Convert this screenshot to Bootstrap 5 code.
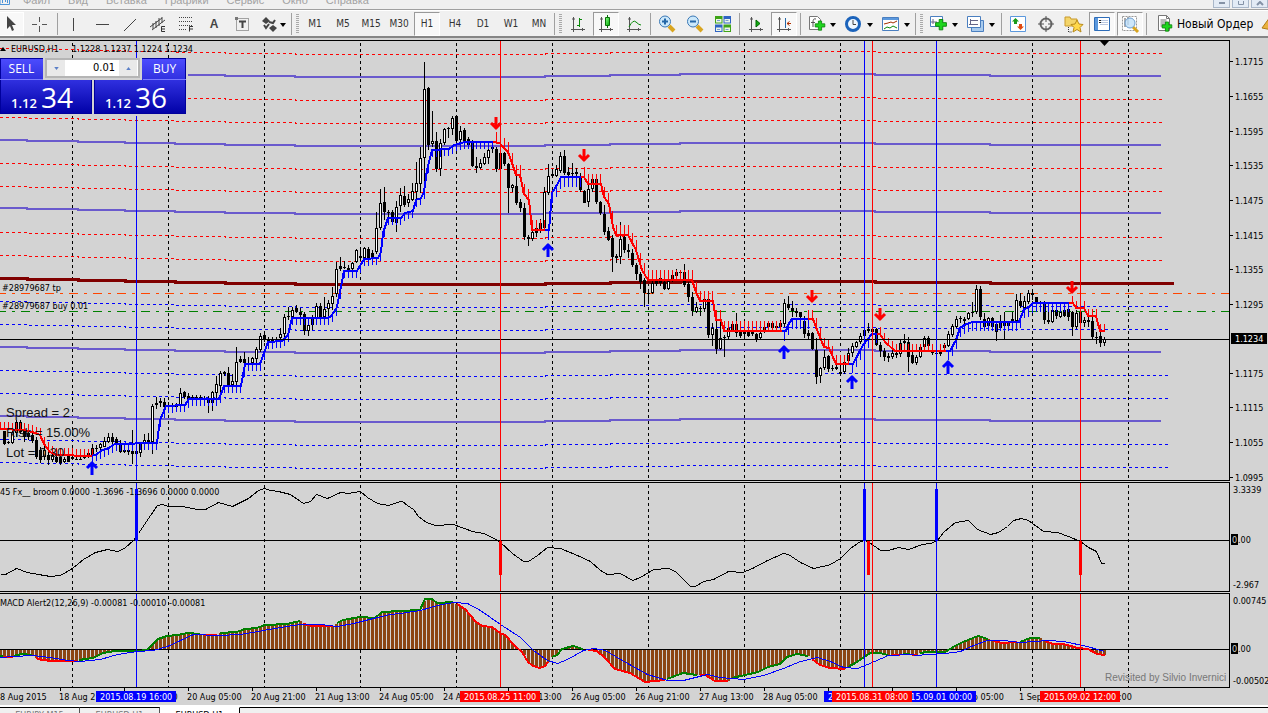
<!DOCTYPE html>
<html lang="ru">
<head>
<meta charset="utf-8">
<meta name="viewport" content="width=device-width, initial-scale=1">
<title>EURUSD,H1</title>
<link href="https://cdn.jsdelivr.net/npm/bootstrap@5.3.0/dist/css/bootstrap.min.css" rel="stylesheet">
<style>
  :root { --face:#f0f0f0; --plot:#d3d3d3; }
  body { background:var(--face); font-family:"DejaVu Sans Condensed","DejaVu Sans",sans-serif; font-size:9px; line-height:12px; color:#000; }
  button { font-family:inherit; color:inherit; }
  .menubar { height:9px; }
  .menubar .entries { font:11px/14px "Liberation Sans",sans-serif; margin:-7px 0 0 13px; gap:18px; }
  .menubar a { color:#a3a3a3; text-decoration:none; }
  .winbtns { gap:2px; }
  .winbtn { width:17px; height:8px; border:1px solid #a9b7c9; border-top:0; background:#e3ebf5; padding:0; }
  .winbtn svg { display:block; margin:auto; }
  .tools { height:29px; border-top:1px solid #a0a0a0; border-bottom:2px solid #858585; box-shadow:inset 0 1px #fff; padding:2px 0 1px; white-space:nowrap; }
  .tool { width:28px; height:24px; padding:0; border:0; background:none; flex:none; }
  .tool svg { display:block; margin:auto; width:20px; height:20px; }
  .tool.on { background:#f8f8f8; border:1px solid #fff; border-top-color:#999; border-left-color:#999; width:26px; margin:0 1px; }
  .tool.on.start { margin-left:-2px; border-left-color:#fff; border-top-color:#fff; }
  .tool.tf { font-size:10px; color:#333; }
  .tool.glyph { font:bold 12px/20px "Liberation Sans",sans-serif; color:#444; }
  .tool.drop { width:37px; }
  .tool.drop.narrow { width:34px; }
  .tool.drop svg { width:32px; margin-left:4px; }
  .sepbar { width:1px; background:#a0a0a0; flex:none; height:22px; align-self:center; margin:0 2px 0 1px; }
  .sepbar.wide { margin:0 2px; }
  .grip { width:3px; height:20px; flex:none; align-self:center; background:repeating-linear-gradient(#aaa 0 1px,#f0f0f0 1px 2px); margin:0 2px; }
  .tool.order { font:12px/22px "DejaVu Sans Condensed","DejaVu Sans",sans-serif; width:auto; }
  .order svg { margin:0 2px 0 6px; }
  .chart svg { display:block; width:100%; height:auto; }
  .chart text { font-size:9px; }
  .chart text.readout { font:13px "Liberation Sans",sans-serif; }
  .chart text.credit { font:10px "Liberation Sans",sans-serif; }
  .trade { left:0; top:20px; width:188px; height:58px; background:var(--plot); }
  .trade .pair { gap:2px; }
  .deal { height:56px; width:92px; border:0; padding:0; color:#fff; background:linear-gradient(#4d4dff 0,#2d2ddc 24px,#0000a6 100%); box-shadow:inset 0 0 0 1px #00009c; font-family:"Open Sans",sans-serif; }
  .deal .cap { display:block; width:43px; height:22px; font:12px/21px "Open Sans",sans-serif; border-bottom:1px solid #7b7bff; }
  .deal .price { display:flex; justify-content:flex-end; align-items:baseline; gap:4px; font-size:13px; line-height:32px; font-weight:600; padding-right:19px; height:34px; }
  .deal .price b { font-size:28px; font-weight:400; line-height:34px; }
  .sell { clip-path:polygon(0 0,43px 0,43px 22px,100% 22px,100% 100%,0 100%); }
  .buy { clip-path:polygon(48px 0,100% 0,100% 100%,0 100%,0 22px,48px 22px); }
  .buy .cap { margin-left:auto; }
  .lots { left:45px; top:0; width:95px; height:20px; border:2px solid #b5b5b5; background:#fff; }
  .lots input { width:54px; border:0; padding:0 4px 0 0; text-align:right; font-size:11px; background:#fff; min-width:0; }
  .lots button { width:18px; border:0; padding:0; background:#e9e9e9; }
  .lots svg { width:5px; height:3px; display:block; margin:auto; }
  .tabs { border-top:2px solid #fff; background:var(--face); }
  .tabs a { font:9px/10px "DejaVu Sans Condensed",sans-serif; color:#777; text-decoration:none; border-top:1px solid #000; padding:2px 0 0; height:14px; text-align:center; width:80px; border-right:1px solid #555; }
  .tabs a.current { background:#fff; color:#000; border-top-color:#fff; border-right-color:#000; }
  .tabs .rest { border-top:1px solid #000; }
</style>
<script src="https://cdn.jsdelivr.net/npm/bootstrap@5.3.0/dist/js/bootstrap.bundle.min.js"></script>
</head>
<body>
<svg width="0" height="0" class="position-absolute" aria-hidden="true">
  <defs>
    <linearGradient id="lime" x1="0" y1="0" x2="1" y2="1"><stop offset="0" stop-color="#8f8"/><stop offset="1" stop-color="#0a0"/></linearGradient>
    <symbol id="i-axes" viewBox="0 0 20 20"><path d="M5.500 3v15M3 15.500h14M4 5h3M14.500 14v3" stroke="#555" fill="none"/></symbol>
    <symbol id="i-plus" viewBox="0 0 20 20"><path d="M8 5h4v3.500h4v4h-4v4H8v-4H4v-4h4z" fill="#1ed61e" stroke="#078007"/></symbol>
    <symbol id="i-down" viewBox="0 0 6 4"><path d="M0 0h6L3 4z"/></symbol>
    <symbol id="i-sheet" viewBox="0 0 20 20"><path d="M3.500 1.500h8l3 3v12h-11z" fill="#fff" stroke="#777"/><path d="M11.500 1.500v3h3M5.500 6h6M5.500 8h6M5.500 10h6M5.500 12h4" stroke="#777" fill="none"/></symbol>
  </defs>
</svg>

<div class="d-flex flex-column vh-100 overflow-hidden">
  <header class="menubar d-flex overflow-hidden flex-shrink-0">
    <svg width="10" height="6" viewBox="0 0 10 6"><path d="M0 0v4.500h9.500V0M2.500 0v3M5.500 0v2M7.500 0v3" stroke="#4d94d8" fill="none"/></svg>
    <nav class="entries d-flex">
      <a href="#">Файл</a><a href="#">Вид</a><a href="#">Вставка</a><a href="#">Графики</a><a href="#">Сервис</a><a href="#">Окно</a><a href="#">Справка</a>
    </nav>
    <div class="winbtns d-flex ms-auto">
      <button class="winbtn" aria-label="Свернуть"><svg width="8" height="6"><path d="M1 2h6" stroke="#8492a6" stroke-width="2"/></svg></button>
      <button class="winbtn" aria-label="Развернуть"><svg width="8" height="6"><path d="M1.500 0v3.500h5V0" stroke="#8492a6" fill="none"/></svg></button>
      <button class="winbtn" aria-label="Закрыть"><svg width="8" height="6"><path d="M1 4l3-3 3 3" stroke="#8492a6" stroke-width="2" fill="none"/></svg></button>
    </div>
  </header>

  <div class="tools d-flex align-items-center overflow-hidden flex-shrink-0" role="toolbar">
    <button class="tool on start" aria-label="Курсор"><svg viewBox="0 0 20 20"><path d="M6 2l9 9h-4l2 5-2 1-2-5-3 3z" fill="#444"/></svg></button>
    <button class="tool" aria-label="Перекрестие"><svg viewBox="0 0 20 20"><path d="M10.500 3v5M10.500 12v6M3 10.500h5M13 10.500h5" stroke="#555" fill="none"/></svg></button>
    <span class="sepbar ms-1"></span>
    <button class="tool" aria-label="Вертикальная линия"><svg viewBox="0 0 20 20"><path d="M9.500 4v13" stroke="#444"/></svg></button>
    <button class="tool" aria-label="Горизонтальная линия"><svg viewBox="0 0 20 20"><path d="M4 10.500h13" stroke="#444"/></svg></button>
    <button class="tool" aria-label="Трендовая линия"><svg viewBox="0 0 20 20"><path d="M4 17L16 5" stroke="#444"/></svg></button>
    <button class="tool" aria-label="Канал"><svg viewBox="0 0 20 20"><path d="M2 13L14 4M4 16L17 6M5 9v6M8 7v7M11 4v8M14 3v6" stroke="#444" fill="none"/><path d="M17 12.500h-3.500v5H17M13.500 15H17" stroke="#333" fill="none"/></svg></button>
    <button class="tool" aria-label="Фибоначчи"><svg viewBox="0 0 20 20"><path d="M3 3.500h14M3 7.500h14M3 11.500h14M3 15.500h8" stroke="#444" stroke-dasharray="1 1"/><path d="M17 12.500h-3.500v5M13.500 15H17" stroke="#333" fill="none"/></svg></button>
    <button class="tool glyph">A</button>
    <button class="tool" aria-label="Текстовая метка"><svg viewBox="0 0 20 20"><path d="M4.500 4.500h12v12h-12z" fill="none" stroke="#555" stroke-dasharray="1 1"/><path d="M3 3h3v3H3z" fill="#777"/><path d="M7 7.500h7M10.500 7v7" stroke="#444" stroke-width="2"/></svg></button>
    <button class="tool drop narrow" aria-label="Стрелки"><svg viewBox="0 0 32 20"><path d="M2 7l4-4 4 4-4 3zM9 14l4-3 4 3-4 4z" fill="#444"/><path d="M4 11l2 3 3-4M9 8l4 1 2-3" stroke="#444" stroke-width="2" fill="none"/><use href="#i-down" x="20" y="9" width="6" height="4"/></svg></button>
    <span class="sepbar"></span><span class="grip"></span>
    <button class="tool tf">M1</button><button class="tool tf">M5</button><button class="tool tf">M15</button><button class="tool tf">M30</button><button class="tool tf on">H1</button><button class="tool tf">H4</button><button class="tool tf">D1</button><button class="tool tf">W1</button><button class="tool tf">MN</button>
    <span class="sepbar"></span><span class="grip"></span>
    <button class="tool" aria-label="Бары"><svg viewBox="0 0 20 20"><use href="#i-axes"/><path d="M11.500 4v9M9 11.500h2.500M11.500 5.500H14" stroke="#0a8a0a" fill="none"/></svg></button>
    <button class="tool on" aria-label="Свечи"><svg viewBox="0 0 20 20"><use href="#i-axes"/><path d="M11.500 1v13" stroke="#087008"/><path d="M9.500 3.500h4v8h-4z" fill="url(#lime)" stroke="#087008"/></svg></button>
    <button class="tool" aria-label="Линия"><svg viewBox="0 0 20 20"><use href="#i-axes"/><path d="M5 13q4-8 7-5t5 3" stroke="#0a8a0a" fill="none"/></svg></button>
    <span class="sepbar wide"></span>
    <button class="tool" aria-label="Увеличить"><svg viewBox="0 0 20 20"><path d="M12 12l5 5" stroke="#d9a520" stroke-width="4"/><circle cx="8" cy="7.500" r="5.500" fill="#cbe8fb" stroke="#3a78b5"/><path d="M5 7.500h6M8 4.500v6" stroke="#2467a8" stroke-width="2"/></svg></button>
    <button class="tool" aria-label="Уменьшить"><svg viewBox="0 0 20 20"><path d="M12 12l5 5" stroke="#d9a520" stroke-width="4"/><circle cx="8" cy="7.500" r="5.500" fill="#cbe8fb" stroke="#3a78b5"/><path d="M5 7.500h6" stroke="#2467a8" stroke-width="2"/></svg></button>
    <button class="tool" aria-label="Окна"><svg viewBox="0 0 20 20"><path d="M2 2h7.500v7.500H2zM10.500 10.500H18V18h-7.500z" fill="#3fa417"/><path d="M10.500 2H18v7.500h-7.500zM2 10.500h7.500V18H2z" fill="#2f64c4"/><path d="M3 5h5.500v3.500H3zM11.500 5H17v3.500h-5.500zM3 13.500h5.500V17H3zM11.500 13.500H17V17h-5.500z" fill="#eef6e8"/><path d="M4 6.500h3M12.500 6.500h3M4 15.500h3M12.500 15.500h3" stroke="#7a9ad0"/></svg></button>
    <span class="sepbar wide"></span>
    <button class="tool" aria-label="Автопрокрутка"><svg viewBox="0 0 20 20"><use href="#i-axes"/><path d="M10 6l4 3.500-4 3.500z" fill="#1a1" stroke="#060"/></svg></button>
    <button class="tool on" aria-label="Сдвиг"><svg viewBox="0 0 20 20"><use href="#i-axes"/><path d="M11.500 4v10" stroke="#2467a8"/><path d="M17 9.500h-4M15.500 7.500l-2.500 2 2.500 2" stroke="#b03000" fill="none"/></svg></button>
    <span class="sepbar wide"></span>
    <button class="tool drop" aria-label="Индикаторы"><svg viewBox="0 0 32 20"><path d="M2.500 2.500h8l3 3v10h-11z" fill="#fff" stroke="#777"/><path d="M9 5q-3-1-3 3v5M4 8.500h4" stroke="#555" fill="none"/><use href="#i-plus" x="5" y="3" width="16" height="16"/><use href="#i-down" x="23" y="9" width="6" height="4"/></svg></button>
    <button class="tool drop" aria-label="Периоды"><svg viewBox="0 0 32 20"><circle cx="9" cy="10" r="6.500" fill="#eef7ff" stroke="#1b63bb" stroke-width="3"/><path d="M9 6v4.500h3" stroke="#444" fill="none"/><use href="#i-down" x="23" y="9" width="6" height="4"/></svg></button>
    <button class="tool drop" aria-label="Шаблоны"><svg viewBox="0 0 32 20"><path d="M1.500 3.500h16v13h-16z" fill="#fff" stroke="#4a7fc0"/><path d="M2 4h15v2H2z" fill="#5b98dd"/><path d="M3 10l4-1 3-1 2 1 4-2" stroke="#a33000" fill="none"/><path d="M3 15l3-2 3 1 3-2 4 2" stroke="#0a8a0a" fill="none"/><use href="#i-down" x="23" y="9" width="6" height="4"/></svg></button>
    <span class="sepbar"></span><span class="grip"></span>
    <button class="tool drop" aria-label="Новый график"><svg viewBox="0 0 32 20"><path d="M1.500 2.500h12v10h-12z" fill="#fff" stroke="#4a7fc0"/><path d="M4 5v5M2 8h6" stroke="#668"/><use href="#i-plus" x="3" y="1" width="18" height="18"/><use href="#i-down" x="23" y="9" width="6" height="4"/></svg></button>
    <button class="tool drop" aria-label="Профили"><svg viewBox="0 0 32 20"><path d="M5.500 6.500h12v11h-12z" fill="#a9cbee" stroke="#4a7fc0"/><path d="M1.500 2.500h13v11h-13z" fill="#fff" stroke="#4a7fc0"/><path d="M4.500 5v6M3 10.500h9M4 6.500h8" stroke="#668" fill="none"/><use href="#i-down" x="23" y="9" width="6" height="4"/></svg></button>
    <span class="sepbar wide"></span>
    <button class="tool" aria-label="Обзор рынка"><svg viewBox="0 0 20 20"><path d="M2.500 2.500h15v15h-15z" fill="#fff" stroke="#5b98dd"/><path d="M7.500 4l3.500 3.500H9V10H6V7.500H4z" fill="#1a9a1a"/><path d="M12.500 16L9 12.500h2V10h3v2.500h2z" fill="#e04a10"/></svg></button>
    <button class="tool" aria-label="Окно данных"><svg viewBox="0 0 20 20"><circle cx="10" cy="10" r="5.500" fill="none" stroke="#666" stroke-width="2"/><path d="M10 2v6M10 12v6M2 10h6M12 10h6" stroke="#555"/></svg></button>
    <button class="tool" aria-label="Навигатор"><svg viewBox="0 0 20 20"><path d="M1 3h5l1 2h6v7H1z" fill="#f4d56a" stroke="#c89a2c"/><path d="M4.500 13v5H8" stroke="#333" stroke-dasharray="1 1" fill="none"/><path d="M13 6l2 4 4 .500-3 3 1 4.500-4-2.500L9 18l1-4.500-3-3 4-.500z" fill="#ffd84a" stroke="#b88a1a"/></svg></button>
    <button class="tool on" aria-label="Терминал"><svg viewBox="0 0 20 20"><path d="M2.500 3.500h15v13h-15z" fill="#fff" stroke="#2d6cb8"/><path d="M3 4h3v12H3z" fill="#5b98dd"/><path d="M8 6.500h8M8 8.500h8M8 10.500h8" stroke="#b9c7e0"/><path d="M7 6.500h2M7 8.500h2" stroke="#222"/></svg></button>
    <button class="tool on" aria-label="Тестер"><svg viewBox="0 0 20 20"><path d="M2.500 2.500h14v14h-14z" fill="#fff" stroke="#999" stroke-dasharray="2 1"/><path d="M5 4v9M8 3v8" stroke="#555"/><path d="M13 13l5 5" stroke="#d9a520" stroke-width="3"/><circle cx="10" cy="9" r="5" fill="#bfe0fa" fill-opacity=".8" stroke="#6f9fce"/></svg></button>
    <span class="sepbar wide"></span>
    <button class="tool order d-flex align-items-center"><svg viewBox="0 0 20 20"><use href="#i-sheet"/><use href="#i-plus" x="4" y="4" width="16" height="16"/></svg><span>Новый Ордер</span></button>
    <button class="tool" aria-label="Эксперт"><svg viewBox="0 0 20 20"><path d="M5 14L13 3l7 5v9z" fill="#e9b13c" stroke="#b07a18"/></svg></button>
  </div>

  <main class="chart position-relative flex-shrink-0">
    <svg id="plot" viewBox="0 38 1268 667" role="img" aria-label="EURUSD H1"></svg>
    <form class="trade position-absolute">
      <div class="pair d-flex position-relative">
        <button type="button" class="deal sell"><span class="cap">SELL</span><span class="price">1.12 <b>34</b></span></button>
        <button type="button" class="deal buy"><span class="cap">BUY</span><span class="price">1.12 <b>36</b></span></button>
        <div class="lots position-absolute d-flex">
          <button type="button" aria-label="Меньше"><svg viewBox="0 0 6 4"><path d="M0 0h6L3 4z" fill="#5b7fc7"/></svg></button>
          <input type="text" value="0.01" aria-label="Объём">
          <button type="button" aria-label="Больше"><svg viewBox="0 0 6 4"><path d="M0 4h6L3 0z" fill="#5b7fc7"/></svg></button>
        </div>
      </div>
    </form>
  </main>

  <nav class="tabs d-flex flex-grow-1">
    <a href="#">EURJPY,M15</a><a href="#">EURUSD,H1</a><a href="#" class="current">EURUSD,H1</a><span class="rest flex-grow-1"></span>
  </nav>
</div>

<script>
const svg = document.getElementById('plot');
const NS = 'http://www.w3.org/2000/svg';
function el(name, attrs, text) {
  const n = document.createElementNS(NS, name);
  for (const k in attrs) n.setAttribute(k, attrs[k]);
  if (text !== undefined) n.textContent = text;
  svg.appendChild(n);
  return n;
}
const rect = (x, y, w, h, fill) => el('rect', {x, y, width:w, height:h, fill});
const label = (x, y, t, fill = '#000', extra = {}) => el('text', {x, y, fill, ...extra}, t);
// stroke along pixel centres, without smoothing
const line = (pts, stroke, width = 1, dash) => {
  const o = width % 2 ? .5 : 0;
  return el('polyline', {points: pts.map(p => (p[0] + o) + ',' + (p[1] + o)).join(' '), fill:'none', stroke,
    'stroke-width':width, 'shape-rendering':'crispEdges', ...(dash ? {'stroke-dasharray':dash} : {})});
};
// series are stored in thirds of a unit, relative to an origin
const unpack = (x0, y0, s) => s.trim().split(/\s+/).map(p => p.split(',').map(Number)).map(([x, y]) => [Math.round(x0 + x / 3), Math.round(y0 + y / 3)]);

rect(0, 38, 1268, 667, '#d3d3d3');

// day separators
for (let x = 72; x < 1200; x += 96)
  for (const [a, b] of [[42, 480], [484, 591], [595, 687]]) line([[x, a], [x, b]], '#000', 1, '3 3');

// channel: centre average with parallel levels
const centre = [[-1,278],[27,279],[78,280],[125,281],[175,282],[225,283],[295,284],[480,284],[545,283],[610,282],[680,281],[860,281],[875,282],[975,282],[990,283],[1173,283]];
const stepped = (off, end) => {
  const out = [];
  centre.forEach(([x, y], i) => {
    if (x > end) x = end;
    if (i) { const px = out[out.length - 1]; if (px[1] !== y + off) out.push([x, px[1]]); }
    out.push([x, y + off]);
  });
  return out;
};
for (const o of [-230,-184,-161,-115,-92,-46,-23]) line(stepped(o, 1163), '#ff0000', 1, '3 3');
for (const o of [23,46,92,115,161,184]) line(stepped(o, 1168), '#0000ff', 1, '3 3');
for (const o of [-207,-138,-70,69,138]) line(stepped(o, 1161), '#6a5acd', 2);
line(stepped(0, 1173), '#800000', 3);
line([[-4,293],[1229,293]], '#ff4500', 1, '9 6 3 6');
line([[-4,311],[1229,311]], '#008000', 1, '9 6 3 6');

// candles: high, body top, body bottom, low (thirds), w = hollow, b = solid
const candles = [
 [4,260,'512 512 552 555b 543 545 549 551w 505 515 550 552w 480 487 520 530w 480 485 515 522b 505 512 530 545b 510 518 530 540b 520 525 542 548b 530 540 590 598b 560 570 600 608b 550 570 590 600w 570 585 600 615b 575 585 600 605w 578 590 605 610b 585 592 610 615b 590 597 607 610w 580 585 605 607b 585 590 597 600b 592 596 598 600b 592 596 598 600b 585 590 595 597w 572 580 590 595b 553 563 585 587w 555 563 568 575w 550 553 563 570w 530 543 560 562w 518 532 545 548w 520 532 545 552b 530 538 552 555b 540 552 575 580b 565 571 577 580b 562 571 577 585b 510 572 583 613b 565 573 583 587w 545 553 578 592w 523 540 552 555w 520 540 552 555b 433 437 545 583w 412 430 434 447b 413 424 428 440b 413 427 440 445b 425 434 440 445b 430 435 442 445b 430 435 440 450b 385 400 437 440w 392 396 412 417b 400 407 420 430b 405 412 418 430b 405 412 418 428b 405 412 418 428b 408 413 420 430b 408 413 430 460b 392 397 430 452w 347 373 400 415w 333 338 377 400w 333 337 343 347b 322 338 375 390b 343 362 375 380w 262 307 367 377w 287 298 305 310b 277 298 310 315b 290 308 312 315b 290 295 310 315w 262 268 297 310w 220 227 270 275w 222 225 240 245b 232 236 242 250b 230 236 242 250b 230 236 242 250b 205 223 235 240w 162 172 223 235w 140 168 171 180b 142 150 170 175w 135 145 155 160b 143 155 165 175b 155 163 213 225b 190 195 212 228w 165 175 195 210b 130 137 175 180w 130 137 170 180b 112 147 170 178w 120 130 147 170w'],
 [332,50,'710 737 763 780w 635 658 733 740w 622 648 658 662b 632 650 653 658b 645 653 660 663b 635 640 658 662w 598 600 635 640w 600 617 623 630b 590 595 625 630w 590 598 625 630b 600 608 628 632b 487 535 607 612w 418 458 535 540w 412 457 487 510b 480 485 489 500b 480 487 515 522b 453 470 520 547w 415 435 467 485w 408 437 465 470b 432 447 458 470w 398 423 450 452w 337 400 425 450w 290 325 403 430w 37 118 325 440w 112 115 285 300b 183 272 283 290w 245 273 358 365b 267 280 358 378w 235 237 278 285w 230 233 238 265b 198 205 238 255w 198 198 273 280b 228 243 270 275w 235 240 275 280b 262 267 285 290b 270 272 347 352b 320 347 353 368b 328 340 353 356w 310 322 342 345w 290 300 323 342w 285 290 296 310b 290 297 358 367b 300 310 358 362b 305 310 343 347b 340 343 415 488b 402 405 415 425w 370 408 458 465b 448 455 473 487b 460 475 560 570b 555 562 567 588b 530 545 567 572w 510 533 550 560b 507 520 540 550b 412 427 535 540w 343 378 430 435w 357 373 378 385b 345 358 377 380w 305 317 363 370w 300 318 370 375b 352 367 375 385b 340 368 373 380b 355 365 372 380b 370 377 420 425b 420 423 458 460b 405 417 455 470w 380 388 417 425w 380 388 455 462b 452 455 490 495b 465 492 547 555b 530 543 570 572b 555 565 620 665b 612 618 625 640b 517 567 620 643w 545 560 600 610b 582 600 607 625b 597 610 645 650b 640 645 673 690b 665 673 695 718b'],
 [644,230,'145 150 190 230b 180 188 193 220b 150 160 190 192w 145 153 162 167b 143 145 160 167b 150 155 178 180b 148 153 177 180w 120 135 150 155w 118 125 137 140w 120 125 128 135b 102 125 165 170b 155 163 200 215b 187 200 243 257b 215 232 245 250w 228 233 238 258b 200 208 237 245w 200 207 315 325b 280 293 315 347w 257 297 357 373b 240 323 357 360w 315 320 325 382w 285 293 322 328w 275 283 300 305w 250 283 310 320b 298 303 318 325b 298 303 312 320b 300 307 317 320b 300 307 313 318b 308 313 330 335b 300 308 325 330w 277 290 303 308w 275 280 292 300w 275 278 293 300b 280 288 294 303b 270 280 290 295w 207 220 283 290w 197 222 235 240b 213 235 243 262b 235 243 250 262b 245 247 262 268b 257 272 313 325b 300 308 318 327b 305 308 357 360b 325 360 440 462b 412 415 437 460w 360 380 415 420w 375 378 418 425b 405 413 418 422w 405 411 417 420b 390 425 431 435b 380 395 427 432w 355 370 393 405w 340 347 370 380w 332 337 350 355w 310 317 337 342w 293 300 318 325w 280 298 303 310b 293 298 305 310b 293 297 345 348b 335 345 362 380b 355 362 380 393b 370 378 385 395b 360 368 380 388w 362 370 375 383b 330 340 372 380w 312 333 340 360b 322 335 380 425b 365 375 400 402b 375 380 400 405w 345 350 380 384w 318 325 350 355w 318 325 348 360b 345 360 370 374b 360 368 373 375b 350 360 373 377b 340 345 355 362w 303 313 348 350w 282 288 315 320w 257 268 290 295w'],
 [960,250,'197 205 208 220b 200 208 212 222b 185 190 207 210w 155 185 190 200b 105 118 187 192w 108 118 200 210b 190 208 230 238b 200 203 227 230w 200 205 230 235b 218 222 245 272b 195 213 233 242w 185 215 228 268b 212 218 228 235b 187 207 220 225b 132 150 213 222w 130 153 167 175b 138 153 175 180w 120 130 157 162w 120 130 136 150b 140 142 155 165b 152 157 161 165b 153 158 210 222b 182 210 217 223b 178 180 217 220w 175 180 197 207b 177 187 200 205w 175 180 197 202b 175 178 200 212b 183 187 230 257b 180 190 230 237w 182 187 218 225b 200 210 220 232w 200 210 215 230b 200 213 260 267b 245 260 265 283b 245 258 278 290b 262 268 278 287w']
];
for (const [x0, y0, s] of candles)
  s.match(/\d+ \d+ \d+ \d+[wb]/g).forEach((c, i) => {
    const [h, t, b, l] = c.slice(0, -1).split(' ').map(v => Math.round(y0 + v / 3));
    const x = x0 + i * 4, hh = Math.max(1, b - t);
    rect(x, h, 1, Math.max(1, l - h), '#000');
    rect(x - 1, t, 3, hh, '#000');
    if (c.endsWith('w') && hh > 2) rect(x, t + 1, 1, hh - 2, '#fff');
  });

// trend line with a tick on every bar; the sign gives the side of the tick
const R = '#ff0000', B = '#0000ff';
const trend = [
 [R,-7,[[0,429],[24,430],[32,432],[40,435],[44,444],[50,452],[56,455],[92,456]]],
 [B,7,[[92,456],[97,454],[102,450],[107,449],[115,444],[157,443],[160,420],[166,406],[185,405],[189,399],[219,399],[224,386],[241,386],[245,364],[260,364],[264,353],[268,342],[282,341],[288,335],[292,318],[328,318],[331,316],[334,312],[337,307],[344,271],[357,271],[364,259],[378,258],[381,252],[383,233],[388,218],[401,218],[405,213],[413,211],[416,200],[421,198],[424,192],[427,170],[432,150],[449,149],[454,145],[465,142],[493,142]]],
 [R,-10,[[493,142],[500,143],[501,145],[508,152],[512,163],[516,175],[520,175],[524,194],[529,200],[532,230],[545,230]]],
 [B,10,[[545,230],[549,230],[552,193],[557,185],[561,177],[581,177]]],
 [R,-10,[[581,177],[584,177],[588,184],[601,184],[604,197],[609,204],[613,227],[616,235],[628,235],[636,250],[642,270],[648,280],[692,280],[696,292],[700,301],[713,301],[716,320],[721,320],[724,331],[782,331]]],
 [B,10,[[782,331],[786,331],[788,325],[792,319],[808,319]]],
 [R,-9,[[808,319],[813,319],[817,330],[824,347],[829,348],[836,364],[849,364]]],
 [B,9,[[849,364],[853,364],[863,345],[872,334],[877,334]]],
 [R,-7,[[877,334],[880,334],[885,342],[895,351],[946,351]]],
 [B,9,[[946,351],[950,351],[956,340],[960,328],[966,324],[973,322],[1019,322],[1024,309],[1028,308],[1033,303],[1069,303]]],
 [R,-7,[[1069,303],[1073,303],[1076,308],[1084,308],[1088,316],[1096,316],[1100,331],[1105,331]]]
];
const at = (pts, x) => {
  for (let i = 1; i < pts.length; i++) if (x <= pts[i][0]) {
    const [a, b] = [pts[i - 1], pts[i]];
    return b[0] === a[0] ? b[1] : a[1] + (b[1] - a[1]) * (x - a[0]) / (b[0] - a[0]);
  }
  return pts[pts.length - 1][1];
};
for (const [c, len, pts] of trend) {
  for (let x = Math.ceil(pts[0][0] / 4) * 4; x <= pts[pts.length - 1][0]; x += 4) {
    const y = Math.round(at(pts, x));
    rect(x, len > 0 ? y : y + len, 1, Math.abs(len), c);
  }
  line(pts, c, 2);
}

// signal arrows
for (const [x, y] of [[92,461],[548,243],[784,345],[852,375],[948,360]])
  el('path', {d:`M${x} ${y + 1}v13M${x - 5} ${y + 7}l5-5 5 5`, stroke:B, 'stroke-width':3, fill:'none'});
for (const [x, y] of [[496,117],[584,149],[812,290],[880,308],[1072,281]])
  el('path', {d:`M${x} ${y}v12M${x - 5} ${y + 6}l5 5 5-5`, stroke:R, 'stroke-width':3, fill:'none'});

line([[-1,339],[1229,339]], '#000');

// first indicator
const osc = [
 ...unpack(0,480,'0,283 15,282 48,265 80,275 115,282 150,289 180,285 217,265 250,238 285,215 320,207 350,214 372,205 400,180 415,160 445,115 470,75 485,73 505,78 545,77 590,88 615,88 655,65 695,79 745,55 775,30 793,25 810,31 835,33 870,42 910,70 930,62 948,43 980,53 1020,37 1045,40 1080,34 1100,52 1130,70 1165,76 1200,63'),
 ...unpack(400,480,'5,63 20,75 38,88 55,108 78,127 105,135 160,133 215,153 250,158 275,170 300,187 335,220 370,243 385,243 410,225 440,202 480,203 530,225 570,243 600,270 620,283 660,280 695,301 720,292 760,268 805,265 825,272 850,298 870,317 885,318 910,302 940,298 985,273 1025,277 1055,265 1100,240 1150,219 1165,223 1200,245 1238,265 1280,255'),
 ...unpack(830,480,'0,253 30,233 60,203 90,183 103,181 118,185 150,209 175,209 205,202 235,208 275,191 300,189 320,180 340,155 375,125 415,121 440,147 480,163 505,157 530,137 550,121 572,115 595,120 640,153 680,155 715,167 750,182 775,202 798,213 812,250 822,250')];
line(osc, '#000');
line([[-1,540],[1229,540]], '#000');
for (const x of [136,864,936]) rect(x - 1, 489, 3, 52, B);
for (const x of [500,868,1080]) rect(x - 1, 541, 3, 34, R);

// MACD: coloured outline, bars and signal
const G = '#008000';
const macd = [
 [G,0,'0,527 8,527'],[R,0,'12,530 38,530'],[G,0,'42,528 50,525 65,521 95,525'],[R,0,'108,533 125,540 160,543 232,543'],
 [G,0,'238,541 280,533 310,518 345,512 410,513 440,511 455,495 475,477 500,468 530,464 565,458 600,461'],[R,0,'612,464 650,464'],
 [G,0,'660,459 710,455 735,448 770,445 795,435 860,433 900,422'],[R,0,'910,433 940,439 1000,439'],
 [G,0,'1010,430 1030,421 1080,410 1125,413 1145,395 1200,392 1260,391'],
 [G,400,'60,390 75,357 95,357 110,369 160,366'],
 [R,400,'170,373 195,388 225,422 245,437 275,442 300,460 315,466 345,497 365,517 385,547 400,557 420,564 435,557 445,545'],
 [G,400,'455,532 470,525 485,508 520,498 550,506'],[R,400,'565,509 590,513 615,535 645,566 690,580 735,606 795,600'],
 [G,400,'800,598 850,578 890,584'],[R,400,'900,584 915,585 945,602 985,602'],
 [G,400,'995,595 1075,577 1105,562 1140,551 1160,532 1190,522 1225,528'],[R,400,'1235,538 1260,555 1290,563'],[R,830,'0,563 45,568'],
 [G,830,'55,560 80,545 120,518 150,519 175,525'],[R,830,'185,525 210,525'],[G,830,'220,521 240,521'],[R,830,'245,525 262,525'],
 [G,830,'270,520 290,516 345,515 375,498 400,487 430,475 445,469 475,478'],[R,830,'490,483 515,489 560,487'],
 [G,830,'570,485 600,474 630,474'],[R,830,'645,484 670,491 700,492 745,503 775,508 800,522 825,524']
].map(([c, x0, s]) => [c, unpack(x0, 480, s)]);
const all = macd.flatMap(m => m[1]);
for (let x = 0; x <= 1104; x += 4) {
  const y = Math.round(at(all, x));
  rect(x - 1, Math.min(y, 649), 3, Math.abs(y - 649), '#8b4513');
}
line([[-1,649],[1229,649]], '#000');
for (const [c, pts] of macd) line(pts, c, 2);
line([
 ...unpack(0,480,'0,530 40,529 95,525 150,530 200,540 240,543 300,537 350,523 410,514 460,511 500,497 540,480 580,462 650,464 720,461 790,449 840,440 900,431 960,431 1010,438 1060,430 1120,413 1170,402'),
 ...unpack(400,480,'0,398 60,391 110,376 160,365 200,369 240,390 300,433 360,471 400,510 440,540 470,548 500,537 550,509 580,505 615,509 660,537 740,583 800,600 850,600 920,583 960,592 1030,598 1090,585 1150,565 1200,543 1250,532'),
 ...unpack(830,480,'0,542 40,562 80,563 110,552 175,525 240,522 262,525 290,523 345,520 390,512 430,495 470,479 520,479 570,487 650,479 700,482 770,497 800,506 822,514')], B);

// event lines through all panes
for (const [x, c] of [[136,B],[864,B],[936,B],[500,R],[872,R],[1080,R]])
  for (const [a, b] of [[41,480],[483,591],[594,687]]) rect(x, a, 1, b - a, c);

// frames
for (const y of [40,480,482,591,593,687]) rect(0, y, 1230, 1, '#000');
for (const [a, b] of [[40,480],[482,591],[593,687]]) rect(1229, a, 1, b - a + 1, '#000');

// price scale
[[61,'1.1715'],[96,'1.1655'],[131,'1.1595'],[165,'1.1535'],[200,'1.1475'],[235,'1.1415'],[269,'1.1355'],[304,'1.1295'],[373,'1.1175'],[407,'1.1115'],[442,'1.1055'],[477,'1.0995']]
  .forEach(([y, t]) => { rect(1230, y, 3, 1, '#000'); label(1235, y + 4, t); });
rect(1231, 333, 36, 11, '#000'); label(1235, 342, '1.1234', '#fff');
label(1233, 493, '3.3339'); label(1233, 588, '-2.967');
label(1233, 604, '0.00745'); label(1233, 684, '-0.00502');
for (const y of [540,649]) { rect(1231, y - 6, 7, 11, '#000'); label(1232, y + 3, '0', '#d3d3d3'); label(1238, y + 3, '.00'); }

// time scale
['18 Aug 21:00','19 Aug 13:00','20 Aug 05:00','20 Aug 21:00','21 Aug 13:00','24 Aug 05:00','24 Aug 21:00','25 Aug 13:00','26 Aug 05:00','26 Aug 21:00','27 Aug 13:00','28 Aug 05:00','','','1 Sep 05:00','1 Sep 21:00','2 Sep 13:00']
  .forEach((t, i) => { rect(60 + i * 64, 688, 1, 3, '#000'); label(59 + i * 64, 700, t); });
label(0, 700, '8 Aug 2015');
for (const [x, t, c] of [[96,'2015.08.19 16:00',B],[460,'2015.08.25 11:00',R],[824,'2015.08.31 05:00',B],[896,'2015.09.01 00:00',B],[832,'2015.08.31 08:00',R],[1040,'2015.09.02 12:00',R]]) {
  rect(x, 691, 80, 11, c); label(x + 4, 700, t, '#fff');
}

// captions
el('path', {d:'M0 51l3-4 3 4z'});
el('path', {d:'M1100 41h9l-4.500 5z'});
label(11, 52, 'EURUSD,H1');
label(72, 52, '1.1228 1.1237 1.1224 1.1234');
label(2, 291, '#28979687 tp');
label(2, 309, '#28979687 buy 0.01');
label(0, 495, '45 Fx__ broom 0.0000 -1.3696 -1.3696 0.0000 0.0000');
label(0, 606, 'MACD Alert2(12,26,9) -0.00081 -0.00010 -0.00081');
label(6, 417, 'Spread = 2', '#111', {class:'readout'});
label(6, 437, 'Risk = 15.00%', '#111', {class:'readout'});
label(6, 457, 'Lot = 0.30', '#111', {class:'readout'});
label(1105, 681, 'Revisited by Silvio Invernici', '#777', {class:'credit'});
</script>
</body>
</html>
